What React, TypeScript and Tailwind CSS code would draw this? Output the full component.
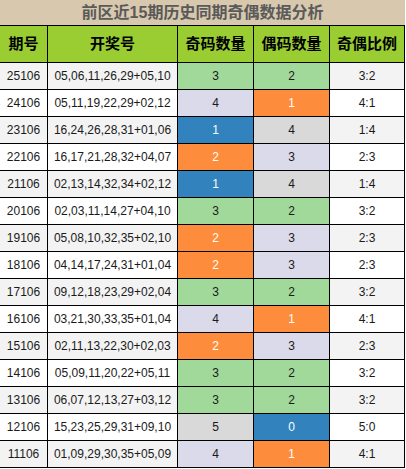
import React from "react";

type Row = [string, string, number, number, string];

const rows: Row[] = [
  ["25106", "05,06,11,26,29+05,10", 3, 2, "3:2"],
  ["24106", "05,11,19,22,29+02,12", 4, 1, "4:1"],
  ["23106", "16,24,26,28,31+01,06", 1, 4, "1:4"],
  ["22106", "16,17,21,28,32+04,07", 2, 3, "2:3"],
  ["21106", "02,13,14,32,34+02,12", 1, 4, "1:4"],
  ["20106", "02,03,11,14,27+04,10", 3, 2, "3:2"],
  ["19106", "05,08,10,32,35+02,10", 2, 3, "2:3"],
  ["18106", "04,14,17,24,31+01,04", 2, 3, "2:3"],
  ["17106", "09,12,18,23,29+02,04", 3, 2, "3:2"],
  ["16106", "03,21,30,33,35+01,04", 4, 1, "4:1"],
  ["15106", "02,11,13,22,30+02,03", 2, 3, "2:3"],
  ["14106", "05,09,11,20,22+05,11", 3, 2, "3:2"],
  ["13106", "06,07,12,13,27+03,12", 3, 2, "3:2"],
  ["12106", "15,23,25,29,31+09,10", 5, 0, "5:0"],
  ["11106", "01,09,29,30,35+05,09", 4, 1, "4:1"],
];

const oddCls: Record<number, string> = {
  0: "bg-[#3182bd] text-white",
  1: "bg-[#3182bd] text-white",
  2: "bg-[#fd8d3c] text-white",
  3: "bg-[#a1d99b] text-[#1a1a1a]",
  4: "bg-[#dadaeb] text-[#1a1a1a]",
  5: "bg-[#d9d9d9] text-[#1a1a1a]",
};

const evenCls: Record<number, string> = {
  0: "bg-[#3182bd] text-white",
  1: "bg-[#fd8d3c] text-white",
  2: "bg-[#a1d99b] text-[#1a1a1a]",
  3: "bg-[#dadaeb] text-[#1a1a1a]",
  4: "bg-[#d9d9d9] text-[#1a1a1a]",
  5: "bg-[#d9d9d9] text-[#1a1a1a]",
};

const font = { fontFamily: '"Liberation Sans", "Noto Sans CJK SC", sans-serif' };

export default function App() {
  return (
    <div className="w-[406px] h-[469px] bg-white" style={font}>
      <div className="w-[405px]">
        <div className="h-[26px] bg-[#d8c8ad] border-b border-black flex items-center justify-center text-[16px] font-bold text-[#5a5a5a]">
          前区近15期历史同期奇偶数据分析
        </div>
        <div className="flex h-[37px] bg-[#9acd32] border-b border-black text-[15px] font-bold text-black">
          <div className="w-[48px] border-r border-black flex items-center justify-center">期号</div>
          <div className="w-[130px] border-r border-black flex items-center justify-center">开奖号</div>
          <div className="w-[76px] border-r border-black flex items-center justify-center">奇码数量</div>
          <div className="w-[76px] border-r border-black flex items-center justify-center">偶码数量</div>
          <div className="w-[75px] border-r border-black flex items-center justify-center">奇偶比例</div>
        </div>
        {rows.map((r, i) => {
          const bg = i % 2 === 0 ? "bg-[#f3f3f3]" : "bg-white";
          return (
            <div key={r[0]} className={`flex h-[27px] border-b border-black text-[12px] text-[#1a1a1a] ${bg}`}>
              <div className="w-[48px] border-r border-black flex items-center justify-center">{r[0]}</div>
              <div className="w-[130px] border-r border-black flex items-center justify-center">{r[1]}</div>
              <div className={`w-[76px] border-r border-black flex items-center justify-center ${oddCls[r[2]]}`}>{r[2]}</div>
              <div className={`w-[76px] border-r border-black flex items-center justify-center ${evenCls[r[3]]}`}>{r[3]}</div>
              <div className="w-[75px] border-r border-black flex items-center justify-center">{r[4]}</div>
            </div>
          );
        })}
      </div>
    </div>
  );
}
